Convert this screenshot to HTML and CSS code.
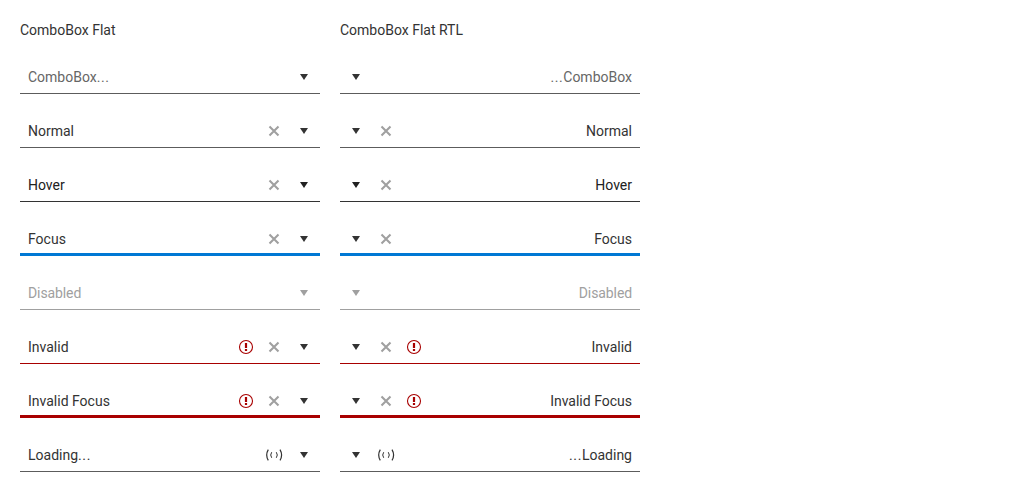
FILE: index.html
```
<!DOCTYPE html>
<html lang="en">
<head>
<meta charset="utf-8">
<title>ComboBox Flat</title>
<link rel="stylesheet" href="styles.css">
</head>
<body>
<svg class="sprite" aria-hidden="true">
  <symbol id="caret" viewBox="0 0 16 16"><path d="M4 5h8l-4 6z"/></symbol>
  <symbol id="clear" viewBox="0 0 16 16"><path d="M3.5 3.5l9 9M12.5 3.5l-9 9" fill="none" stroke="currentColor" stroke-width="2.1"/></symbol>
  <symbol id="alert" viewBox="0 0 16 16"><circle cx="8" cy="8" r="6.5" fill="none" stroke="currentColor" stroke-width="1.1"/><path d="M6.9 4h2.2v5H6.9zM6.9 10h2.2v2H6.9z"/></symbol>
  <symbol id="load" viewBox="0 0 18 16"><path d="M3.3 2.6Q.1 8 3.3 13.4M15 2.6Q18.2 8 15 13.4" fill="none" stroke="currentColor" stroke-width="1.2"/><path d="M6.7 5.2Q4.7 8 6.7 10.8M11.3 5.2Q13.3 8 11.3 10.8" fill="none" stroke="currentColor"/></symbol>
</svg>
<main class="columns">
  <section class="column">
    <h1 class="title">ComboBox Flat</h1>
    <div class="combo placeholder"><span class="text">ComboBox<span class="dots">...</span></span><svg class="caret"><use href="#caret"/></svg></div>
    <div class="combo"><span class="text">Normal</span><svg class="clear"><use href="#clear"/></svg><svg class="caret"><use href="#caret"/></svg></div>
    <div class="combo hover"><span class="text">Hover</span><svg class="clear"><use href="#clear"/></svg><svg class="caret"><use href="#caret"/></svg></div>
    <div class="combo focus"><span class="text">Focus</span><svg class="clear"><use href="#clear"/></svg><svg class="caret"><use href="#caret"/></svg></div>
    <div class="combo disabled"><span class="text">Disabled</span><svg class="caret"><use href="#caret"/></svg></div>
    <div class="combo invalid"><span class="text">Invalid</span><svg class="alert"><use href="#alert"/></svg><svg class="clear"><use href="#clear"/></svg><svg class="caret"><use href="#caret"/></svg></div>
    <div class="combo invalid-focus"><span class="text">Invalid Focus</span><svg class="alert"><use href="#alert"/></svg><svg class="clear"><use href="#clear"/></svg><svg class="caret"><use href="#caret"/></svg></div>
    <div class="combo"><span class="text">Loading<span class="dots">...</span></span><svg class="load"><use href="#load"/></svg><svg class="caret"><use href="#caret"/></svg></div>
  </section>
  <section class="column">
    <h1 class="title">ComboBox Flat RTL</h1>
    <div class="combo placeholder" dir="rtl"><span class="text">ComboBox<span class="dots">...</span></span><svg class="caret"><use href="#caret"/></svg></div>
    <div class="combo" dir="rtl"><span class="text">Normal</span><svg class="clear"><use href="#clear"/></svg><svg class="caret"><use href="#caret"/></svg></div>
    <div class="combo hover" dir="rtl"><span class="text">Hover</span><svg class="clear"><use href="#clear"/></svg><svg class="caret"><use href="#caret"/></svg></div>
    <div class="combo focus" dir="rtl"><span class="text">Focus</span><svg class="clear"><use href="#clear"/></svg><svg class="caret"><use href="#caret"/></svg></div>
    <div class="combo disabled" dir="rtl"><span class="text">Disabled</span><svg class="caret"><use href="#caret"/></svg></div>
    <div class="combo invalid" dir="rtl"><span class="text">Invalid</span><svg class="alert"><use href="#alert"/></svg><svg class="clear"><use href="#clear"/></svg><svg class="caret"><use href="#caret"/></svg></div>
    <div class="combo invalid-focus" dir="rtl"><span class="text">Invalid Focus</span><svg class="alert"><use href="#alert"/></svg><svg class="clear"><use href="#clear"/></svg><svg class="caret"><use href="#caret"/></svg></div>
    <div class="combo" dir="rtl"><span class="text">Loading<span class="dots">...</span></span><svg class="load"><use href="#load"/></svg><svg class="caret"><use href="#caret"/></svg></div>
  </section>
</main>
</body>
</html>
```
FILE: styles.css
```
* { box-sizing: border-box; }
body { margin: 0; background: #fff; color: #333; font: 14px/20px Roboto, sans-serif; }
.sprite { display: none; }
.columns { display: flex; gap: 20px; padding: 20px; }
.column { width: 300px; display: flex; flex-direction: column; gap: 20px; }
.title { margin: 0; font-size: 14px; font-weight: 400; line-height: 20px; }
.combo { height: 34px; display: flex; align-items: flex-start; padding: 0 8px; border-bottom: 1px solid #5c5c5c; }
.text { flex: 1; line-height: 34px; }
.dots { letter-spacing: .6px; }
.combo svg { width: 16px; height: 16px; margin-top: 9px; margin-inline-start: 12px; fill: currentColor; }
.combo .caret { margin-inline-start: 14px; }
.combo .clear { color: #a0a0a0; }
.combo .alert { color: #a80000; }
.combo .load { width: 18px; margin-inline-end: -1px; }
.placeholder .text { color: #666; }
.hover { color: #212121; border-color: #333; }
.focus { border-bottom: 3px solid #0078d4; }
.disabled { color: #a0a0a0; border-color: #a0a0a0; }
.disabled .text { letter-spacing: -.1px; }
.invalid { border-color: #a80000; }
.invalid-focus { border-bottom: 3px solid #a80000; }
```
